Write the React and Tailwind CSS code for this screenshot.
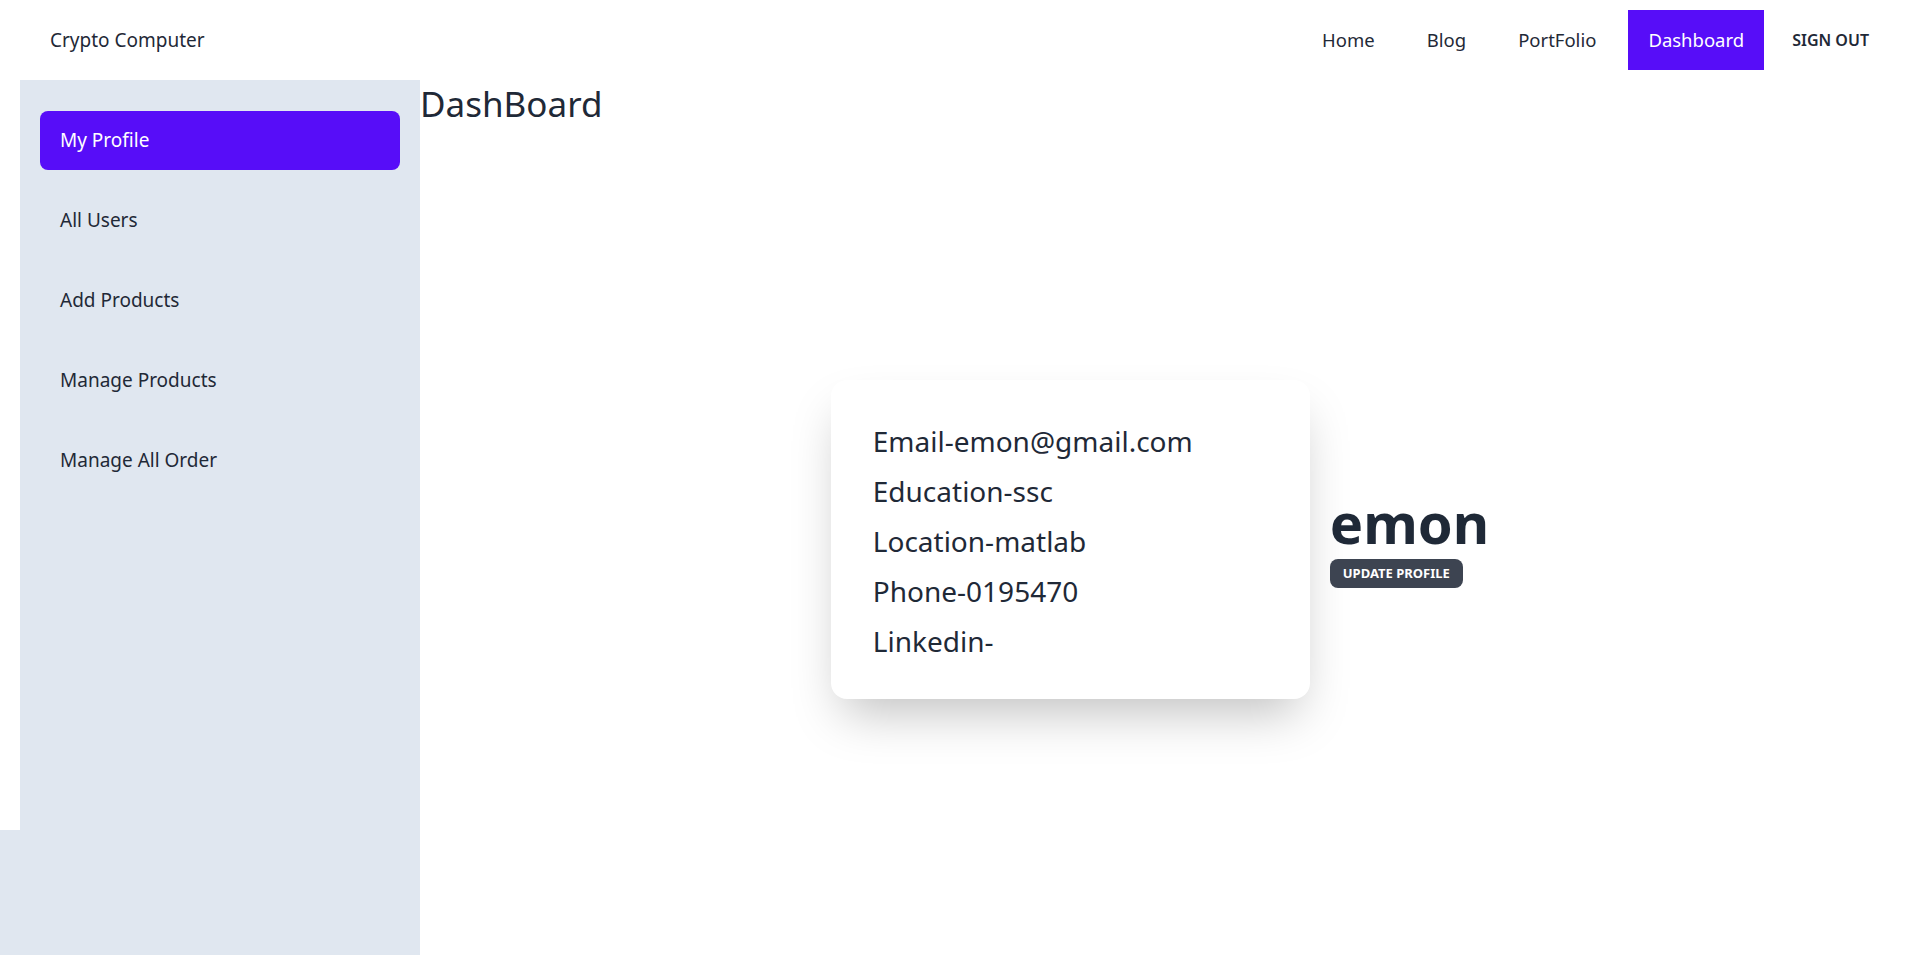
import React from 'react';

const font = { fontFamily: '"Noto Sans", "Open Sans", sans-serif' };

const navLinks = ['Home', 'Blog', 'PortFolio'];
const menu = ['My Profile', 'All Users', 'Add Products', 'Manage Products', 'Manage All Order'];
const details = [
  'Email-emon@gmail.com',
  'Education-ssc',
  'Location-matlab',
  'Phone-0195470',
  'Linkedin-',
];

const App = () => {
  return (
    <div style={font} className="w-[1920px] h-[955px] flex flex-col bg-white text-[#1f2937] overflow-hidden">
      {/* barra superior */}
      <header className="h-[80px] flex items-center justify-between pl-[50px] pr-[35px]">
        <span className="text-[19px]">Crypto Computer</span>
        <nav className="flex items-center gap-3 h-full">
          {navLinks.map(link => (
            <a key={link} className="px-5 text-[18.5px]">{link}</a>
          ))}
          <a className="h-[60px] flex items-center px-5 text-[18.5px] text-white bg-[#570df8]">Dashboard</a>
          <button className="px-4 text-[16px] font-semibold uppercase">Sign Out</button>
        </nav>
      </header>

      <div className="flex flex-1 min-h-0">
        {/* menú lateral */}
        <aside className="w-[420px] flex flex-col">
          <div className="h-[750px] flex">
            <div className="w-5 bg-white"></div>
            <ul className="flex-1 bg-[#e0e7f0] pt-[31px] px-5 flex flex-col gap-[21px]">
              {menu.map((item, i) => (
                <li
                  key={item}
                  className={`h-[59px] flex items-center px-5 rounded-lg text-[19px] ${
                    i === 0 ? 'bg-[#570df8] text-white' : 'text-[#1f2937]'
                  }`}
                >
                  {item}
                </li>
              ))}
            </ul>
          </div>
          <div className="flex-1 bg-[#e0e7f0]"></div>
        </aside>

        {/* contenido */}
        <main className="flex-1 flex flex-col">
          <h1 className="text-[35px] leading-[48px] font-normal">DashBoard</h1>
          <div className="flex-1 flex items-center justify-center pr-[20px] pb-[4px]">
            <div className="flex items-center gap-5">
              <div className="w-[479px] h-[319px] bg-white rounded-2xl shadow-2xl pl-[42px] pr-10 py-[36px]">
                {details.map(d => (
                  <p key={d} className="text-[28px] leading-[50px]">{d}</p>
                ))}
              </div>
              <div className="flex flex-col items-start gap-[6px]">
                <h2 className="text-[56px] leading-[62px] font-bold">emon</h2>
                <button className="h-[29px] px-[13px] rounded-lg bg-[#3d4451] text-white text-[13px] font-bold uppercase">
                  Update Profile
                </button>
              </div>
            </div>
          </div>
        </main>
      </div>
    </div>
  );
};

export default App;
